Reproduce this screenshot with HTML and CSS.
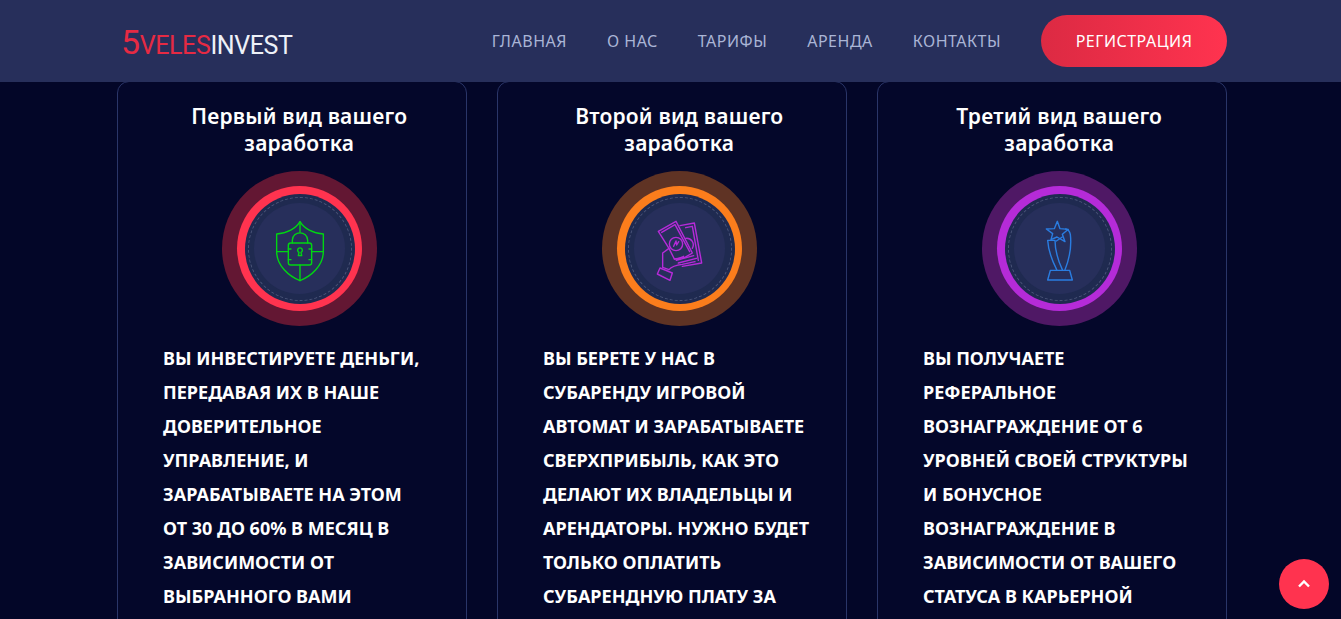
FILE: index.html
```html
<!DOCTYPE html>
<html lang="ru">
<head>
    <meta charset="UTF-8">
    <title>5VelesInvest</title>
    <link rel="stylesheet" href="styles.css">
</head>
<body>
    <header class="header">
        <div class="header-inner">
            <a class="logo" href="#"><span class="logo-five">5</span><span class="logo-red">VELES</span>INVEST</a>
            <nav class="nav">
                <a href="#">Главная</a>
                <a href="#">О нас</a>
                <a href="#">Тарифы</a>
                <a href="#">Аренда</a>
                <a href="#">Контакты</a>
            </nav>
            <a class="btn-register" href="#">Регистрация</a>
        </div>
    </header>

    <main class="cards">
        <section class="card">
            <h3 class="card-title">Первый вид вашего заработка</h3>
            <div class="badge badge-red">
                <div class="badge-ring">
                    <div class="badge-dash">
                        <div class="badge-core">
                            <svg class="badge-icon icon-green" width="60" height="70" viewBox="165 145 180 210">
                                <path d="M255 168C243 188 216 204 185 205V258C185 300 222 332 255 345C288 332 325 300 325 258V205C294 204 267 188 255 168Z"/>
                                <path d="M255 168V200M255 298V345M185 258H220M290 258H325"/>
                                <rect x="220" y="232" width="70" height="66" rx="7"/>
                                <path d="M232 232V224C232 194 278 194 278 224V232"/>
                                <path d="M220 250H228M282 250H290M220 282H228M282 282H290"/>
                                <path d="M250 270L252 260A7 7 0 1 1 258 260L260 270H250Z"/>
                            </svg>
                        </div>
                    </div>
                </div>
            </div>
            <p class="card-text">Вы инвестируете деньги, передавая их в наше доверительное управление, и зарабатываете на этом от 30 до 60% в месяц в зависимости от выбранного вами</p>
        </section>

        <section class="card">
            <h3 class="card-title">Второй вид вашего заработка</h3>
            <div class="badge badge-orange">
                <div class="badge-ring">
                    <div class="badge-dash">
                        <div class="badge-core">
                            <svg class="badge-icon icon-purple" width="60" height="70" viewBox="165 145 180 210">
                                <path d="M190 197L243 167L292 262L270 275L238 280L222 248Z"/>
                                <path d="M200 200L240 177L284 258"/>
                                <path d="M255 180L298 172L320 292L262 302"/>
                                <path d="M272 186L292 182L310 284"/>
                                <circle cx="243" cy="235" r="20"/>
                                <path d="M236 242L243 226L245 238L251 228"/>
                                <path d="M272 218A20 20 0 0 1 292 248"/>
                                <path d="M203 305V262L222 248M203 305L222 312C232 300 246 298 262 296L300 288M238 280C248 282 256 276 266 272M250 292L304 278M244 284L296 270"/>
                                <path d="M195 307L232 322L225 344L187 325Z"/>
                            </svg>
                        </div>
                    </div>
                </div>
            </div>
            <p class="card-text">Вы берете у нас в субаренду игровой автомат и зарабатываете сверхприбыль, как это делают их владельцы и арендаторы. Нужно будет только оплатить субарендную плату за</p>
        </section>

        <section class="card">
            <h3 class="card-title">Третий вид вашего заработка</h3>
            <div class="badge badge-purple">
                <div class="badge-ring">
                    <div class="badge-dash">
                        <div class="badge-core">
                            <svg class="badge-icon icon-blue" width="60" height="70" viewBox="165 145 180 210">
                                <path d="M247 167L255 189L280 191L262 206L270 228L246 214L228 222L233 204L214 190L238 189Z"/>
                                <path d="M226 314L284 314L292 343L218 343Z"/>
                                <path d="M245 312C232 286 220 260 218 224H240C240 256 250 286 262 312"/>
                                <path d="M270 312C282 282 290 240 286 206C284 196 280 192 272 190"/>
                                <path d="M244 226L262 214"/>
                            </svg>
                        </div>
                    </div>
                </div>
            </div>
            <p class="card-text">Вы получаете реферальное вознаграждение от 6 уровней своей структуры и бонусное вознаграждение в зависимости от вашего статуса в карьерной</p>
        </section>
    </main>

    <a class="to-top" href="#">
        <svg width="14" height="10" viewBox="0 0 14 10"><path d="M2 7.5L7 2.5L12 7.5"/></svg>
    </a>
</body>
</html>
```

FILE: styles.css
```css
* {
    box-sizing: border-box;
}
html, body {
    height: 100%;
    overflow: hidden;
}
body {
    margin: 0;
    background: #030628;
    font-family: "Noto Sans", "Open Sans", sans-serif;
    color: #fff;
}
a {
    text-decoration: none;
    color: inherit;
}

/* header */
.header {
    position: relative;
    z-index: 2;
    height: 82px;
    background: #272f5b;
}
.header-inner {
    display: flex;
    align-items: center;
    width: 1110px;
    height: 100%;
    margin-left: 117px;
    padding-left: 4px;
}
.logo {
    display: flex;
    align-items: baseline;
    font-family: "Roboto", sans-serif;
    font-size: 25px;
    letter-spacing: -0.4px;
    color: #eef1f8;
    padding-top: 3px;
}
.logo-five {
    font-size: 34px;
    line-height: 1;
    color: #e62a43;
}
.logo-red {
    color: #e62a43;
}
.nav {
    display: flex;
    gap: 40px;
    margin-left: auto;
    font-size: 16px;
    letter-spacing: 0.5px;
    text-transform: uppercase;
    color: #aab5d6;
}
.btn-register {
    display: flex;
    align-items: center;
    justify-content: center;
    width: 186px;
    height: 52px;
    margin-left: 40px;
    border-radius: 26px;
    background: linear-gradient(90deg, #dc2a43, #ff334f);
    font-size: 16px;
    letter-spacing: 0.5px;
    text-transform: uppercase;
}

/* cards */
.cards {
    display: grid;
    grid-template-columns: repeat(3, 350px);
    gap: 30px;
    width: 1110px;
    margin-left: 117px;
    margin-top: -1px;
}
.card {
    padding: 21px 36.5px 40px 45px;
    border: 1px solid #2a3568;
    border-radius: 12px;
    background: #04072a;
}
.card-title {
    margin: 0 -21px 0 -15px;
    padding: 0 30px;
    font-size: 21px;
    font-weight: 600;
    letter-spacing: 0.2px;
    line-height: 27px;
    text-align: center;
}

/* round badge with icon */
.badge {
    display: grid;
    place-items: center;
    width: 155px;
    height: 155px;
    margin: 14px 0 15px 59px;
    border-radius: 50%;
}
.badge-ring {
    display: grid;
    place-items: center;
    width: 125px;
    height: 125px;
    border-radius: 50%;
}
.badge-dash {
    display: grid;
    place-items: center;
    width: 110px;
    height: 110px;
    border-radius: 50%;
    background: #1f2a50;
    position: relative;
}
.badge-dash::before {
    content: "";
    position: absolute;
    inset: 3px;
    border: 1px dashed #4a5478;
    border-radius: 50%;
}
.badge-core {
    display: grid;
    place-items: center;
    width: 91px;
    height: 91px;
    border-radius: 50%;
    background: #272f5b;
}
.badge-icon {
    position: relative;
    fill: none;
    stroke-width: 4.2;
    stroke-linejoin: round;
    stroke-linecap: round;
}
.badge-red { background: #631733; }
.badge-red .badge-ring { background: #ff334f; }
.badge-orange { background: #5f3324; }
.badge-orange .badge-ring { background: #fb7d1c; }
.badge-purple { background: #4f1865; }
.badge-purple .badge-ring { background: #b52bd8; }
.icon-green { stroke: #00d612; }
.icon-purple { stroke: #b52bd8; }
.icon-blue { stroke: #2a7de1; }

.card-text {
    margin: 0;
    font-size: 18px;
    font-weight: 700;
    line-height: 34px;
    text-transform: uppercase;
}

/* scroll to top */
.to-top {
    position: fixed;
    right: 12px;
    bottom: 10px;
    display: grid;
    place-items: center;
    width: 50px;
    height: 50px;
    border-radius: 50%;
    background: #ff334f;
}
.to-top svg {
    fill: none;
    stroke: #fff;
    stroke-width: 2.4;
}
```
